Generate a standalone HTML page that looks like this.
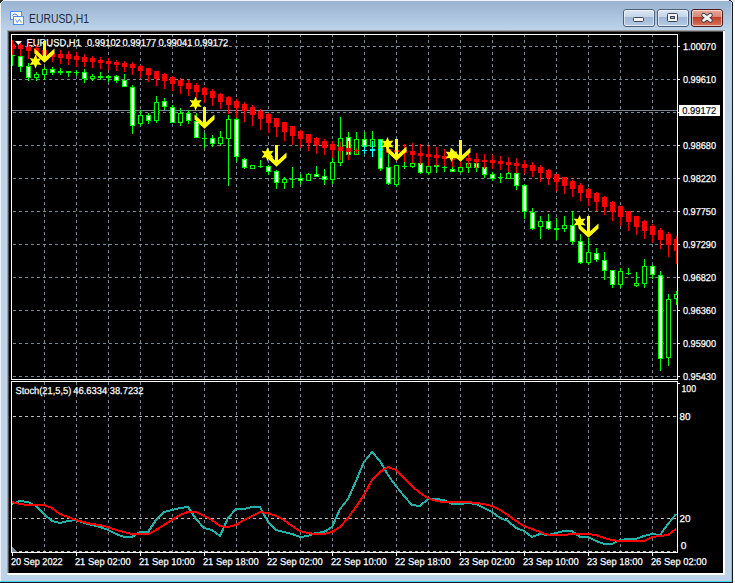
<!DOCTYPE html><html><head><meta charset="utf-8"><style>html,body{margin:0;padding:0;background:#fff;overflow:hidden}svg{display:block}</style></head><body><svg width="735" height="583" viewBox="0 0 735 583"><rect x="0" y="0" width="735" height="583" fill="#ffffff"/><rect x="0" y="0" width="733" height="583" fill="#1a1a1a"/><rect x="0" y="0" width="732" height="582" fill="#bcd3ea"/><defs><linearGradient id="tb" x1="0" y1="0" x2="0" y2="1"><stop offset="0" stop-color="#98b2d0"/><stop offset="1" stop-color="#bdd3ea"/></linearGradient><linearGradient id="bt" x1="0" y1="0" x2="0" y2="1"><stop offset="0" stop-color="#dbe7f4"/><stop offset="0.45" stop-color="#c3d5ea"/><stop offset="0.47" stop-color="#9fb8d5"/><stop offset="1" stop-color="#b8cde6"/></linearGradient><linearGradient id="cl" x1="0" y1="0" x2="0" y2="1"><stop offset="0" stop-color="#e9a99a"/><stop offset="0.45" stop-color="#d88673"/><stop offset="0.47" stop-color="#c0402a"/><stop offset="1" stop-color="#d77a60"/></linearGradient><linearGradient id="cy" x1="0" y1="0" x2="0" y2="1"><stop offset="0" stop-color="#9ee2f4"/><stop offset="0.3" stop-color="#60d8f4"/><stop offset="1" stop-color="#38dcf8"/></linearGradient><clipPath id="mc"><rect x="12" y="35" width="665" height="344"/></clipPath><clipPath id="sc"><rect x="12" y="382" width="665" height="170"/></clipPath></defs><rect x="1" y="1" width="731" height="29" fill="url(#tb)"/><rect x="0" y="0" width="732" height="1" fill="#eef3f9"/><rect x="0" y="0" width="1" height="582" fill="#eef3f9"/><rect x="731" y="2" width="1" height="580" fill="url(#cy)"/><rect x="0" y="581" width="732" height="1" fill="#40d8f0"/><rect x="0" y="0" width="3" height="1" fill="#2a2a2a"/><rect x="0" y="1" width="2" height="1" fill="#2a2a2a"/><rect x="0" y="2" width="1" height="1" fill="#2a2a2a"/><rect x="2" y="1" width="1" height="1" fill="#f0f4f8"/><rect x="1" y="2" width="1" height="1" fill="#f0f4f8"/><rect x="731" y="0" width="4" height="1" fill="#e8e8e8"/><rect x="732" y="1" width="3" height="1" fill="#e8e8e8"/><rect x="729" y="0" width="2" height="1" fill="#2a2a2a"/><rect x="731" y="1" width="1" height="1" fill="#2a2a2a"/><rect x="732" y="2" width="1" height="1" fill="#2a2a2a"/><rect x="7" y="30" width="718" height="1" fill="#a0a0a0"/><rect x="7" y="30" width="1" height="543" fill="#a0a0a0"/><rect x="8" y="31" width="716" height="1" fill="#505050"/><rect x="8" y="31" width="1" height="543" fill="#505050"/><rect x="723" y="31" width="2" height="544" fill="#ffffff"/><rect x="7" y="573" width="718" height="2" fill="#ffffff"/><rect x="9" y="32" width="714" height="541" fill="#000000"/><g shape-rendering="crispEdges"><rect x="10.5" y="11.5" width="11" height="8" fill="#fffdf0" stroke="#4a8cf0"/><rect x="13.5" y="16.5" width="10" height="8" fill="#fffdf0" stroke="#4a8cf0"/></g><path d="M15.5 19.3 L17.3 22.6 L19.4 19.3 L21.4 22.6" stroke="#4a86f0" fill="none" stroke-width="0.9"/><path d="M12.5 15.5 L14 14 L16.5 14.5 L18 16.5" stroke="#3f7ff0" fill="none" stroke-width="1"/><text x="29" y="23" font-family='"Liberation Sans", sans-serif' font-size="12.5" fill="#1e2a3e" textLength="60" lengthAdjust="spacingAndGlyphs">EURUSD,H1</text><rect x="623.5" y="9.5" width="31" height="17" rx="2.5" fill="url(#bt)" stroke="#4e5f78"/><rect x="624.5" y="10.5" width="29" height="15" rx="1.5" fill="none" stroke="#ffffff" stroke-opacity="0.55"/><rect x="657.5" y="9.5" width="31" height="17" rx="2.5" fill="url(#bt)" stroke="#4e5f78"/><rect x="658.5" y="10.5" width="29" height="15" rx="1.5" fill="none" stroke="#ffffff" stroke-opacity="0.55"/><rect x="691.5" y="9.5" width="31" height="17" rx="2.5" fill="url(#cl)" stroke="#4a1a1a"/><rect x="692.5" y="10.5" width="29" height="15" rx="1.5" fill="none" stroke="#ffffff" stroke-opacity="0.55"/><rect x="633.5" y="17.5" width="10" height="4" rx="1" fill="#f4f4f4" stroke="#3a4456"/><rect x="667.5" y="13.5" width="10" height="8" rx="1" fill="#f4f4f4" stroke="#3a4456"/><rect x="670.5" y="16.5" width="4" height="2" fill="#9db4cf" stroke="#3a4456"/><path d="M703.6 15.2 L710.4 20.3 M710.4 15.2 L703.6 20.3" stroke="#3a3a4a" stroke-width="4.6" stroke-linecap="round"/><path d="M703.6 15.2 L710.4 20.3 M710.4 15.2 L703.6 20.3" stroke="#f2f2f2" stroke-width="2.8" stroke-linecap="round"/><g shape-rendering="crispEdges"><line x1="44.5" y1="34" x2="44.5" y2="379" stroke="#778899" stroke-dasharray="3 3"/><line x1="44.5" y1="382" x2="44.5" y2="552" stroke="#778899" stroke-dasharray="3 3"/><line x1="76.5" y1="34" x2="76.5" y2="379" stroke="#778899" stroke-dasharray="3 3"/><line x1="76.5" y1="382" x2="76.5" y2="552" stroke="#778899" stroke-dasharray="3 3"/><line x1="108.5" y1="34" x2="108.5" y2="379" stroke="#778899" stroke-dasharray="3 3"/><line x1="108.5" y1="382" x2="108.5" y2="552" stroke="#778899" stroke-dasharray="3 3"/><line x1="140.5" y1="34" x2="140.5" y2="379" stroke="#778899" stroke-dasharray="3 3"/><line x1="140.5" y1="382" x2="140.5" y2="552" stroke="#778899" stroke-dasharray="3 3"/><line x1="172.5" y1="34" x2="172.5" y2="379" stroke="#778899" stroke-dasharray="3 3"/><line x1="172.5" y1="382" x2="172.5" y2="552" stroke="#778899" stroke-dasharray="3 3"/><line x1="204.5" y1="34" x2="204.5" y2="379" stroke="#778899" stroke-dasharray="3 3"/><line x1="204.5" y1="382" x2="204.5" y2="552" stroke="#778899" stroke-dasharray="3 3"/><line x1="236.5" y1="34" x2="236.5" y2="379" stroke="#778899" stroke-dasharray="3 3"/><line x1="236.5" y1="382" x2="236.5" y2="552" stroke="#778899" stroke-dasharray="3 3"/><line x1="268.5" y1="34" x2="268.5" y2="379" stroke="#778899" stroke-dasharray="3 3"/><line x1="268.5" y1="382" x2="268.5" y2="552" stroke="#778899" stroke-dasharray="3 3"/><line x1="300.5" y1="34" x2="300.5" y2="379" stroke="#778899" stroke-dasharray="3 3"/><line x1="300.5" y1="382" x2="300.5" y2="552" stroke="#778899" stroke-dasharray="3 3"/><line x1="332.5" y1="34" x2="332.5" y2="379" stroke="#778899" stroke-dasharray="3 3"/><line x1="332.5" y1="382" x2="332.5" y2="552" stroke="#778899" stroke-dasharray="3 3"/><line x1="364.5" y1="34" x2="364.5" y2="379" stroke="#778899" stroke-dasharray="3 3"/><line x1="364.5" y1="382" x2="364.5" y2="552" stroke="#778899" stroke-dasharray="3 3"/><line x1="396.5" y1="34" x2="396.5" y2="379" stroke="#778899" stroke-dasharray="3 3"/><line x1="396.5" y1="382" x2="396.5" y2="552" stroke="#778899" stroke-dasharray="3 3"/><line x1="428.5" y1="34" x2="428.5" y2="379" stroke="#778899" stroke-dasharray="3 3"/><line x1="428.5" y1="382" x2="428.5" y2="552" stroke="#778899" stroke-dasharray="3 3"/><line x1="460.5" y1="34" x2="460.5" y2="379" stroke="#778899" stroke-dasharray="3 3"/><line x1="460.5" y1="382" x2="460.5" y2="552" stroke="#778899" stroke-dasharray="3 3"/><line x1="492.5" y1="34" x2="492.5" y2="379" stroke="#778899" stroke-dasharray="3 3"/><line x1="492.5" y1="382" x2="492.5" y2="552" stroke="#778899" stroke-dasharray="3 3"/><line x1="524.5" y1="34" x2="524.5" y2="379" stroke="#778899" stroke-dasharray="3 3"/><line x1="524.5" y1="382" x2="524.5" y2="552" stroke="#778899" stroke-dasharray="3 3"/><line x1="556.5" y1="34" x2="556.5" y2="379" stroke="#778899" stroke-dasharray="3 3"/><line x1="556.5" y1="382" x2="556.5" y2="552" stroke="#778899" stroke-dasharray="3 3"/><line x1="588.5" y1="34" x2="588.5" y2="379" stroke="#778899" stroke-dasharray="3 3"/><line x1="588.5" y1="382" x2="588.5" y2="552" stroke="#778899" stroke-dasharray="3 3"/><line x1="620.5" y1="34" x2="620.5" y2="379" stroke="#778899" stroke-dasharray="3 3"/><line x1="620.5" y1="382" x2="620.5" y2="552" stroke="#778899" stroke-dasharray="3 3"/><line x1="652.5" y1="34" x2="652.5" y2="379" stroke="#778899" stroke-dasharray="3 3"/><line x1="652.5" y1="382" x2="652.5" y2="552" stroke="#778899" stroke-dasharray="3 3"/><line x1="13" y1="46.5" x2="677" y2="46.5" stroke="#778899" stroke-dasharray="3 3"/><line x1="13" y1="79.5" x2="677" y2="79.5" stroke="#778899" stroke-dasharray="3 3"/><line x1="13" y1="112.5" x2="677" y2="112.5" stroke="#778899" stroke-dasharray="3 3"/><line x1="13" y1="145.5" x2="677" y2="145.5" stroke="#778899" stroke-dasharray="3 3"/><line x1="13" y1="178.5" x2="677" y2="178.5" stroke="#778899" stroke-dasharray="3 3"/><line x1="13" y1="211.5" x2="677" y2="211.5" stroke="#778899" stroke-dasharray="3 3"/><line x1="13" y1="244.5" x2="677" y2="244.5" stroke="#778899" stroke-dasharray="3 3"/><line x1="13" y1="277.5" x2="677" y2="277.5" stroke="#778899" stroke-dasharray="3 3"/><line x1="13" y1="310.5" x2="677" y2="310.5" stroke="#778899" stroke-dasharray="3 3"/><line x1="13" y1="343.5" x2="677" y2="343.5" stroke="#778899" stroke-dasharray="3 3"/><line x1="13" y1="376.5" x2="677" y2="376.5" stroke="#778899" stroke-dasharray="3 3"/><line x1="13" y1="416.5" x2="677" y2="416.5" stroke="#c0c0c0" stroke-dasharray="3 3"/><line x1="13" y1="518.5" x2="677" y2="518.5" stroke="#c0c0c0" stroke-dasharray="3 3"/><line x1="13" y1="551.5" x2="677" y2="551.5" stroke="#c0c0c0" stroke-dasharray="3 3"/></g><rect x="12" y="110" width="665" height="1" fill="#778899"/><text x="26.50" y="46" font-family='"Liberation Sans", sans-serif' font-size="10" fill="#ffffff" stroke="#ffffff" stroke-width="0.25" textLength="54.40" lengthAdjust="spacingAndGlyphs" text-rendering="geometricPrecision">EURUSD,H1</text><text x="87.00" y="46" font-family='"Liberation Sans", sans-serif' font-size="10" fill="#ffffff" stroke="#ffffff" stroke-width="0.25" textLength="33.80" lengthAdjust="spacingAndGlyphs" text-rendering="geometricPrecision">0.99102</text><text x="122.50" y="46" font-family='"Liberation Sans", sans-serif' font-size="10" fill="#ffffff" stroke="#ffffff" stroke-width="0.25" textLength="33.80" lengthAdjust="spacingAndGlyphs" text-rendering="geometricPrecision">0.99177</text><text x="158.60" y="46" font-family='"Liberation Sans", sans-serif' font-size="10" fill="#ffffff" stroke="#ffffff" stroke-width="0.25" textLength="33.80" lengthAdjust="spacingAndGlyphs" text-rendering="geometricPrecision">0.99041</text><text x="194.50" y="46" font-family='"Liberation Sans", sans-serif' font-size="10" fill="#ffffff" stroke="#ffffff" stroke-width="0.25" textLength="33.80" lengthAdjust="spacingAndGlyphs" text-rendering="geometricPrecision">0.99172</text><g clip-path="url(#mc)" shape-rendering="crispEdges"><rect x="12" y="55" width="1" height="11" fill="#00ff00"/><rect x="10" y="55" width="5" height="1" fill="#00ff00"/><rect x="20" y="56" width="1" height="16" fill="#00ff00"/><rect x="18" y="56" width="5" height="11" fill="#00ff00"/><rect x="19" y="57" width="3" height="9" fill="#ffffff"/><rect x="28" y="63" width="1" height="18" fill="#00ff00"/><rect x="26" y="66" width="5" height="12" fill="#00ff00"/><rect x="27" y="67" width="3" height="10" fill="#ffffff"/><rect x="36" y="72" width="1" height="9" fill="#00ff00"/><rect x="34" y="74" width="5" height="4" fill="#00ff00"/><rect x="35" y="75" width="3" height="2" fill="#000000"/><rect x="44" y="67" width="1" height="13" fill="#00ff00"/><rect x="42" y="69" width="5" height="6" fill="#00ff00"/><rect x="43" y="70" width="3" height="4" fill="#000000"/><rect x="52" y="67" width="1" height="8" fill="#00ff00"/><rect x="50" y="69" width="5" height="4" fill="#00ff00"/><rect x="51" y="70" width="3" height="2" fill="#ffffff"/><rect x="60" y="68" width="1" height="7" fill="#00ff00"/><rect x="58" y="71" width="5" height="2" fill="#00ff00"/><rect x="68" y="71" width="1" height="6" fill="#00ff00"/><rect x="66" y="71" width="5" height="2" fill="#00ff00"/><rect x="76" y="70" width="1" height="6" fill="#00ff00"/><rect x="74" y="72" width="5" height="1" fill="#00ff00"/><rect x="84" y="69" width="1" height="14" fill="#00ff00"/><rect x="82" y="72" width="5" height="7" fill="#00ff00"/><rect x="83" y="73" width="3" height="5" fill="#ffffff"/><rect x="92" y="74" width="1" height="7" fill="#00ff00"/><rect x="90" y="76" width="5" height="3" fill="#00ff00"/><rect x="91" y="77" width="3" height="1" fill="#000000"/><rect x="100" y="72" width="1" height="8" fill="#00ff00"/><rect x="98" y="76" width="5" height="2" fill="#00ff00"/><rect x="108" y="75" width="1" height="7" fill="#00ff00"/><rect x="106" y="76" width="5" height="2" fill="#00ff00"/><rect x="116" y="75" width="1" height="8" fill="#00ff00"/><rect x="114" y="76" width="5" height="5" fill="#00ff00"/><rect x="115" y="77" width="3" height="3" fill="#ffffff"/><rect x="124" y="74" width="1" height="13" fill="#00ff00"/><rect x="122" y="80" width="5" height="7" fill="#00ff00"/><rect x="123" y="81" width="3" height="5" fill="#ffffff"/><rect x="132" y="85" width="1" height="49" fill="#00ff00"/><rect x="130" y="87" width="5" height="39" fill="#00ff00"/><rect x="131" y="88" width="3" height="37" fill="#ffffff"/><rect x="140" y="110" width="1" height="16" fill="#00ff00"/><rect x="138" y="115" width="5" height="9" fill="#00ff00"/><rect x="139" y="116" width="3" height="7" fill="#000000"/><rect x="148" y="113" width="1" height="11" fill="#00ff00"/><rect x="146" y="115" width="5" height="6" fill="#00ff00"/><rect x="147" y="116" width="3" height="4" fill="#ffffff"/><rect x="156" y="96" width="1" height="27" fill="#00ff00"/><rect x="154" y="102" width="5" height="19" fill="#00ff00"/><rect x="155" y="103" width="3" height="17" fill="#000000"/><rect x="164" y="98" width="1" height="12" fill="#00ff00"/><rect x="162" y="101" width="5" height="6" fill="#00ff00"/><rect x="163" y="102" width="3" height="4" fill="#ffffff"/><rect x="172" y="105" width="1" height="18" fill="#00ff00"/><rect x="170" y="107" width="5" height="16" fill="#00ff00"/><rect x="171" y="108" width="3" height="14" fill="#ffffff"/><rect x="180" y="108" width="1" height="18" fill="#00ff00"/><rect x="178" y="113" width="5" height="10" fill="#00ff00"/><rect x="179" y="114" width="3" height="8" fill="#000000"/><rect x="188" y="110" width="1" height="14" fill="#00ff00"/><rect x="186" y="113" width="5" height="8" fill="#00ff00"/><rect x="187" y="114" width="3" height="6" fill="#ffffff"/><rect x="196" y="113" width="1" height="25" fill="#00ff00"/><rect x="194" y="121" width="5" height="17" fill="#00ff00"/><rect x="195" y="122" width="3" height="15" fill="#ffffff"/><rect x="204" y="133" width="1" height="15" fill="#00ff00"/><rect x="202" y="138" width="5" height="1" fill="#00ff00"/><rect x="212" y="135" width="1" height="12" fill="#00ff00"/><rect x="210" y="138" width="5" height="6" fill="#00ff00"/><rect x="211" y="139" width="3" height="4" fill="#ffffff"/><rect x="220" y="131" width="1" height="15" fill="#00ff00"/><rect x="218" y="137" width="5" height="7" fill="#00ff00"/><rect x="219" y="138" width="3" height="5" fill="#000000"/><rect x="228" y="115" width="1" height="71" fill="#00ff00"/><rect x="226" y="119" width="5" height="20" fill="#00ff00"/><rect x="227" y="120" width="3" height="18" fill="#000000"/><rect x="236" y="117" width="1" height="45" fill="#00ff00"/><rect x="234" y="119" width="5" height="38" fill="#00ff00"/><rect x="235" y="120" width="3" height="36" fill="#ffffff"/><rect x="244" y="158" width="1" height="11" fill="#00ff00"/><rect x="242" y="159" width="5" height="9" fill="#00ff00"/><rect x="243" y="160" width="3" height="7" fill="#ffffff"/><rect x="252" y="165" width="1" height="4" fill="#00ff00"/><rect x="250" y="165" width="5" height="4" fill="#00ff00"/><rect x="251" y="166" width="3" height="2" fill="#000000"/><rect x="260" y="160" width="1" height="8" fill="#00ff00"/><rect x="258" y="166" width="5" height="1" fill="#00ff00"/><rect x="268" y="165" width="1" height="10" fill="#00ff00"/><rect x="266" y="166" width="5" height="6" fill="#00ff00"/><rect x="267" y="167" width="3" height="4" fill="#ffffff"/><rect x="276" y="170" width="1" height="19" fill="#00ff00"/><rect x="274" y="171" width="5" height="12" fill="#00ff00"/><rect x="275" y="172" width="3" height="10" fill="#ffffff"/><rect x="284" y="177" width="1" height="12" fill="#00ff00"/><rect x="282" y="179" width="5" height="4" fill="#00ff00"/><rect x="283" y="180" width="3" height="2" fill="#000000"/><rect x="292" y="167" width="1" height="21" fill="#00ff00"/><rect x="290" y="179" width="5" height="1" fill="#00ff00"/><rect x="300" y="174" width="1" height="11" fill="#00ff00"/><rect x="298" y="178" width="5" height="3" fill="#00ff00"/><rect x="299" y="179" width="3" height="1" fill="#ffffff"/><rect x="308" y="173" width="1" height="8" fill="#00ff00"/><rect x="306" y="174" width="5" height="7" fill="#00ff00"/><rect x="307" y="175" width="3" height="5" fill="#000000"/><rect x="316" y="166" width="1" height="11" fill="#00ff00"/><rect x="314" y="174" width="5" height="3" fill="#00ff00"/><rect x="315" y="175" width="3" height="1" fill="#ffffff"/><rect x="324" y="169" width="1" height="16" fill="#00ff00"/><rect x="322" y="176" width="5" height="4" fill="#00ff00"/><rect x="323" y="177" width="3" height="2" fill="#ffffff"/><rect x="332" y="158" width="1" height="26" fill="#00ff00"/><rect x="330" y="162" width="5" height="18" fill="#00ff00"/><rect x="331" y="163" width="3" height="16" fill="#000000"/><rect x="340" y="117" width="1" height="49" fill="#00ff00"/><rect x="338" y="138" width="5" height="25" fill="#00ff00"/><rect x="339" y="139" width="3" height="23" fill="#000000"/><rect x="348" y="132" width="1" height="24" fill="#00ff00"/><rect x="346" y="137" width="5" height="18" fill="#00ff00"/><rect x="347" y="138" width="3" height="16" fill="#ffffff"/><rect x="356" y="132" width="1" height="23" fill="#00ff00"/><rect x="354" y="139" width="5" height="16" fill="#00ff00"/><rect x="355" y="140" width="3" height="14" fill="#000000"/><rect x="364" y="132" width="1" height="15" fill="#00ff00"/><rect x="362" y="139" width="5" height="8" fill="#00ff00"/><rect x="363" y="140" width="3" height="6" fill="#ffffff"/><rect x="372" y="131" width="1" height="17" fill="#00ff00"/><rect x="370" y="139" width="5" height="8" fill="#00ff00"/><rect x="371" y="140" width="3" height="6" fill="#000000"/><rect x="380" y="139" width="1" height="32" fill="#00ff00"/><rect x="378" y="139" width="5" height="30" fill="#00ff00"/><rect x="379" y="140" width="3" height="28" fill="#ffffff"/><rect x="388" y="154" width="1" height="31" fill="#00ff00"/><rect x="386" y="167" width="5" height="17" fill="#00ff00"/><rect x="387" y="168" width="3" height="15" fill="#ffffff"/><rect x="396" y="165" width="1" height="22" fill="#00ff00"/><rect x="394" y="165" width="5" height="20" fill="#00ff00"/><rect x="395" y="166" width="3" height="18" fill="#000000"/><rect x="404" y="161" width="1" height="8" fill="#00ff00"/><rect x="402" y="166" width="5" height="1" fill="#00ff00"/><rect x="412" y="163" width="1" height="5" fill="#00ff00"/><rect x="410" y="163" width="5" height="4" fill="#00ff00"/><rect x="411" y="164" width="3" height="2" fill="#000000"/><rect x="420" y="163" width="1" height="11" fill="#00ff00"/><rect x="418" y="163" width="5" height="10" fill="#00ff00"/><rect x="419" y="164" width="3" height="8" fill="#ffffff"/><rect x="428" y="165" width="1" height="10" fill="#00ff00"/><rect x="426" y="166" width="5" height="7" fill="#00ff00"/><rect x="427" y="167" width="3" height="5" fill="#000000"/><rect x="436" y="165" width="1" height="8" fill="#00ff00"/><rect x="434" y="165" width="5" height="2" fill="#00ff00"/><rect x="444" y="166" width="1" height="6" fill="#00ff00"/><rect x="442" y="167" width="5" height="1" fill="#00ff00"/><rect x="452" y="167" width="1" height="5" fill="#00ff00"/><rect x="450" y="169" width="5" height="3" fill="#00ff00"/><rect x="451" y="170" width="3" height="1" fill="#ffffff"/><rect x="460" y="167" width="1" height="6" fill="#00ff00"/><rect x="458" y="167" width="5" height="5" fill="#00ff00"/><rect x="459" y="168" width="3" height="3" fill="#000000"/><rect x="468" y="163" width="1" height="10" fill="#00ff00"/><rect x="466" y="163" width="5" height="5" fill="#00ff00"/><rect x="467" y="164" width="3" height="3" fill="#000000"/><rect x="476" y="162" width="1" height="10" fill="#00ff00"/><rect x="474" y="163" width="5" height="5" fill="#00ff00"/><rect x="475" y="164" width="3" height="3" fill="#ffffff"/><rect x="484" y="166" width="1" height="12" fill="#00ff00"/><rect x="482" y="167" width="5" height="8" fill="#00ff00"/><rect x="483" y="168" width="3" height="6" fill="#ffffff"/><rect x="492" y="172" width="1" height="9" fill="#00ff00"/><rect x="490" y="174" width="5" height="5" fill="#00ff00"/><rect x="491" y="175" width="3" height="3" fill="#ffffff"/><rect x="500" y="173" width="1" height="10" fill="#00ff00"/><rect x="498" y="177" width="5" height="1" fill="#00ff00"/><rect x="508" y="172" width="1" height="7" fill="#00ff00"/><rect x="506" y="173" width="5" height="6" fill="#00ff00"/><rect x="507" y="174" width="3" height="4" fill="#000000"/><rect x="516" y="172" width="1" height="18" fill="#00ff00"/><rect x="514" y="173" width="5" height="13" fill="#00ff00"/><rect x="515" y="174" width="3" height="11" fill="#ffffff"/><rect x="524" y="184" width="1" height="35" fill="#00ff00"/><rect x="522" y="185" width="5" height="27" fill="#00ff00"/><rect x="523" y="186" width="3" height="25" fill="#ffffff"/><rect x="532" y="208" width="1" height="22" fill="#00ff00"/><rect x="530" y="212" width="5" height="17" fill="#00ff00"/><rect x="531" y="213" width="3" height="15" fill="#ffffff"/><rect x="540" y="216" width="1" height="23" fill="#00ff00"/><rect x="538" y="221" width="5" height="6" fill="#00ff00"/><rect x="539" y="222" width="3" height="4" fill="#000000"/><rect x="548" y="214" width="1" height="16" fill="#00ff00"/><rect x="546" y="221" width="5" height="8" fill="#00ff00"/><rect x="547" y="222" width="3" height="6" fill="#ffffff"/><rect x="556" y="218" width="1" height="22" fill="#00ff00"/><rect x="554" y="228" width="5" height="2" fill="#00ff00"/><rect x="564" y="216" width="1" height="16" fill="#00ff00"/><rect x="562" y="225" width="5" height="4" fill="#00ff00"/><rect x="563" y="226" width="3" height="2" fill="#000000"/><rect x="572" y="211" width="1" height="33" fill="#00ff00"/><rect x="570" y="225" width="5" height="17" fill="#00ff00"/><rect x="571" y="226" width="3" height="15" fill="#ffffff"/><rect x="580" y="234" width="1" height="30" fill="#00ff00"/><rect x="578" y="241" width="5" height="22" fill="#00ff00"/><rect x="579" y="242" width="3" height="20" fill="#ffffff"/><rect x="588" y="238" width="1" height="27" fill="#00ff00"/><rect x="586" y="252" width="5" height="11" fill="#00ff00"/><rect x="587" y="253" width="3" height="9" fill="#000000"/><rect x="596" y="248" width="1" height="14" fill="#00ff00"/><rect x="594" y="253" width="5" height="7" fill="#00ff00"/><rect x="595" y="254" width="3" height="5" fill="#ffffff"/><rect x="604" y="252" width="1" height="28" fill="#00ff00"/><rect x="602" y="260" width="5" height="11" fill="#00ff00"/><rect x="603" y="261" width="3" height="9" fill="#ffffff"/><rect x="612" y="270" width="1" height="18" fill="#00ff00"/><rect x="610" y="270" width="5" height="15" fill="#00ff00"/><rect x="611" y="271" width="3" height="13" fill="#ffffff"/><rect x="620" y="268" width="1" height="20" fill="#00ff00"/><rect x="618" y="271" width="5" height="14" fill="#00ff00"/><rect x="619" y="272" width="3" height="12" fill="#000000"/><rect x="628" y="268" width="1" height="7" fill="#00ff00"/><rect x="626" y="273" width="5" height="1" fill="#00ff00"/><rect x="636" y="272" width="1" height="15" fill="#00ff00"/><rect x="634" y="283" width="5" height="3" fill="#00ff00"/><rect x="635" y="284" width="3" height="1" fill="#000000"/><rect x="644" y="259" width="1" height="29" fill="#00ff00"/><rect x="642" y="266" width="5" height="18" fill="#00ff00"/><rect x="643" y="267" width="3" height="16" fill="#000000"/><rect x="652" y="265" width="1" height="14" fill="#00ff00"/><rect x="650" y="266" width="5" height="9" fill="#00ff00"/><rect x="651" y="267" width="3" height="7" fill="#ffffff"/><rect x="660" y="271" width="1" height="100" fill="#00ff00"/><rect x="658" y="275" width="5" height="84" fill="#00ff00"/><rect x="659" y="276" width="3" height="82" fill="#ffffff"/><rect x="668" y="294" width="1" height="72" fill="#00ff00"/><rect x="666" y="299" width="5" height="59" fill="#00ff00"/><rect x="667" y="300" width="3" height="57" fill="#000000"/><rect x="676" y="291" width="1" height="14" fill="#00ff00"/><rect x="674" y="294" width="5" height="5" fill="#00ff00"/><rect x="675" y="295" width="3" height="3" fill="#000000"/><rect x="12" y="40" width="1" height="15" fill="#ff0000"/><rect x="10" y="44" width="5" height="5" fill="#ff0000"/><rect x="20" y="43" width="1" height="13" fill="#ff0000"/><rect x="18" y="45" width="5" height="4" fill="#ff0000"/><rect x="28" y="43" width="1" height="16" fill="#ff0000"/><rect x="26" y="47" width="5" height="4" fill="#ff0000"/><rect x="36" y="45" width="1" height="16" fill="#ff0000"/><rect x="34" y="48" width="5" height="5" fill="#ff0000"/><rect x="44" y="47" width="1" height="15" fill="#ff0000"/><rect x="42" y="50" width="5" height="5" fill="#ff0000"/><rect x="52" y="50" width="1" height="12" fill="#ff0000"/><rect x="50" y="53" width="5" height="4" fill="#ff0000"/><rect x="60" y="50" width="1" height="14" fill="#ff0000"/><rect x="58" y="54" width="5" height="4" fill="#ff0000"/><rect x="68" y="51" width="1" height="14" fill="#ff0000"/><rect x="66" y="54" width="5" height="5" fill="#ff0000"/><rect x="76" y="52" width="1" height="15" fill="#ff0000"/><rect x="74" y="56" width="5" height="4" fill="#ff0000"/><rect x="84" y="54" width="1" height="13" fill="#ff0000"/><rect x="82" y="57" width="5" height="5" fill="#ff0000"/><rect x="92" y="56" width="1" height="12" fill="#ff0000"/><rect x="90" y="58" width="5" height="4" fill="#ff0000"/><rect x="100" y="57" width="1" height="12" fill="#ff0000"/><rect x="98" y="60" width="5" height="3" fill="#ff0000"/><rect x="108" y="58" width="1" height="12" fill="#ff0000"/><rect x="106" y="61" width="5" height="3" fill="#ff0000"/><rect x="116" y="60" width="1" height="11" fill="#ff0000"/><rect x="114" y="62" width="5" height="3" fill="#ff0000"/><rect x="124" y="61" width="1" height="11" fill="#ff0000"/><rect x="122" y="63" width="5" height="4" fill="#ff0000"/><rect x="132" y="62" width="1" height="13" fill="#ff0000"/><rect x="130" y="64" width="5" height="4" fill="#ff0000"/><rect x="140" y="65" width="1" height="13" fill="#ff0000"/><rect x="138" y="66" width="5" height="5" fill="#ff0000"/><rect x="148" y="68" width="1" height="14" fill="#ff0000"/><rect x="146" y="68" width="5" height="7" fill="#ff0000"/><rect x="156" y="71" width="1" height="15" fill="#ff0000"/><rect x="154" y="71" width="5" height="8" fill="#ff0000"/><rect x="164" y="73" width="1" height="16" fill="#ff0000"/><rect x="162" y="74" width="5" height="7" fill="#ff0000"/><rect x="172" y="76" width="1" height="15" fill="#ff0000"/><rect x="170" y="77" width="5" height="7" fill="#ff0000"/><rect x="180" y="78" width="1" height="16" fill="#ff0000"/><rect x="178" y="80" width="5" height="6" fill="#ff0000"/><rect x="188" y="80" width="1" height="16" fill="#ff0000"/><rect x="186" y="83" width="5" height="6" fill="#ff0000"/><rect x="196" y="83" width="1" height="15" fill="#ff0000"/><rect x="194" y="85" width="5" height="7" fill="#ff0000"/><rect x="204" y="87" width="1" height="16" fill="#ff0000"/><rect x="202" y="88" width="5" height="7" fill="#ff0000"/><rect x="212" y="89" width="1" height="17" fill="#ff0000"/><rect x="210" y="91" width="5" height="7" fill="#ff0000"/><rect x="220" y="93" width="1" height="16" fill="#ff0000"/><rect x="218" y="94" width="5" height="8" fill="#ff0000"/><rect x="228" y="96" width="1" height="18" fill="#ff0000"/><rect x="226" y="97" width="5" height="8" fill="#ff0000"/><rect x="236" y="99" width="1" height="19" fill="#ff0000"/><rect x="234" y="101" width="5" height="7" fill="#ff0000"/><rect x="244" y="102" width="1" height="20" fill="#ff0000"/><rect x="242" y="104" width="5" height="7" fill="#ff0000"/><rect x="252" y="105" width="1" height="21" fill="#ff0000"/><rect x="250" y="107" width="5" height="8" fill="#ff0000"/><rect x="260" y="109" width="1" height="21" fill="#ff0000"/><rect x="258" y="111" width="5" height="8" fill="#ff0000"/><rect x="268" y="113" width="1" height="20" fill="#ff0000"/><rect x="266" y="114" width="5" height="9" fill="#ff0000"/><rect x="276" y="118" width="1" height="19" fill="#ff0000"/><rect x="274" y="118" width="5" height="9" fill="#ff0000"/><rect x="284" y="122" width="1" height="19" fill="#ff0000"/><rect x="282" y="122" width="5" height="10" fill="#ff0000"/><rect x="292" y="126" width="1" height="19" fill="#ff0000"/><rect x="290" y="126" width="5" height="10" fill="#ff0000"/><rect x="300" y="130" width="1" height="18" fill="#ff0000"/><rect x="298" y="131" width="5" height="8" fill="#ff0000"/><rect x="308" y="134" width="1" height="17" fill="#ff0000"/><rect x="306" y="134" width="5" height="9" fill="#ff0000"/><rect x="316" y="137" width="1" height="17" fill="#ff0000"/><rect x="314" y="138" width="5" height="7" fill="#ff0000"/><rect x="324" y="139" width="1" height="16" fill="#ff0000"/><rect x="322" y="141" width="5" height="7" fill="#ff0000"/><rect x="332" y="141" width="1" height="17" fill="#ff0000"/><rect x="330" y="144" width="5" height="6" fill="#ff0000"/><rect x="340" y="142" width="1" height="18" fill="#ff0000"/><rect x="338" y="147" width="5" height="4" fill="#ff0000"/><rect x="348" y="141" width="1" height="19" fill="#ff0000"/><rect x="346" y="148" width="5" height="4" fill="#ff0000"/><rect x="356" y="148" width="1" height="6" fill="#ff0000"/><rect x="354" y="150" width="5" height="1" fill="#ff0000"/><rect x="364" y="145" width="1" height="9" fill="#00ffff"/><rect x="362" y="150" width="5" height="1" fill="#00ffff"/><rect x="372" y="141" width="1" height="16" fill="#00ffff"/><rect x="370" y="149" width="5" height="2" fill="#00ffff"/><rect x="380" y="140" width="1" height="18" fill="#00ffff"/><rect x="378" y="149" width="5" height="1" fill="#00ffff"/><rect x="388" y="143" width="1" height="11" fill="#ff0000"/><rect x="386" y="149" width="5" height="4" fill="#ff0000"/><rect x="396" y="143" width="1" height="18" fill="#ff0000"/><rect x="394" y="150" width="5" height="2" fill="#ff0000"/><rect x="404" y="144" width="1" height="18" fill="#ff0000"/><rect x="402" y="150" width="5" height="3" fill="#ff0000"/><rect x="412" y="143" width="1" height="20" fill="#ff0000"/><rect x="410" y="151" width="5" height="4" fill="#ff0000"/><rect x="420" y="144" width="1" height="21" fill="#ff0000"/><rect x="418" y="153" width="5" height="3" fill="#ff0000"/><rect x="428" y="146" width="1" height="20" fill="#ff0000"/><rect x="426" y="154" width="5" height="3" fill="#ff0000"/><rect x="436" y="147" width="1" height="19" fill="#ff0000"/><rect x="434" y="155" width="5" height="3" fill="#ff0000"/><rect x="444" y="149" width="1" height="17" fill="#ff0000"/><rect x="442" y="156" width="5" height="3" fill="#ff0000"/><rect x="452" y="150" width="1" height="17" fill="#ff0000"/><rect x="450" y="157" width="5" height="3" fill="#ff0000"/><rect x="460" y="151" width="1" height="16" fill="#ff0000"/><rect x="458" y="157" width="5" height="3" fill="#ff0000"/><rect x="468" y="153" width="1" height="14" fill="#ff0000"/><rect x="466" y="158" width="5" height="3" fill="#ff0000"/><rect x="476" y="153" width="1" height="15" fill="#ff0000"/><rect x="474" y="159" width="5" height="3" fill="#ff0000"/><rect x="484" y="154" width="1" height="15" fill="#ff0000"/><rect x="482" y="160" width="5" height="2" fill="#ff0000"/><rect x="492" y="155" width="1" height="14" fill="#ff0000"/><rect x="490" y="160" width="5" height="3" fill="#ff0000"/><rect x="500" y="156" width="1" height="14" fill="#ff0000"/><rect x="498" y="161" width="5" height="3" fill="#ff0000"/><rect x="508" y="157" width="1" height="15" fill="#ff0000"/><rect x="506" y="162" width="5" height="3" fill="#ff0000"/><rect x="516" y="158" width="1" height="15" fill="#ff0000"/><rect x="514" y="163" width="5" height="3" fill="#ff0000"/><rect x="524" y="160" width="1" height="14" fill="#ff0000"/><rect x="522" y="164" width="5" height="4" fill="#ff0000"/><rect x="532" y="162" width="1" height="15" fill="#ff0000"/><rect x="530" y="165" width="5" height="6" fill="#ff0000"/><rect x="540" y="165" width="1" height="17" fill="#ff0000"/><rect x="538" y="167" width="5" height="6" fill="#ff0000"/><rect x="548" y="169" width="1" height="16" fill="#ff0000"/><rect x="546" y="170" width="5" height="8" fill="#ff0000"/><rect x="556" y="174" width="1" height="17" fill="#ff0000"/><rect x="554" y="174" width="5" height="8" fill="#ff0000"/><rect x="564" y="177" width="1" height="17" fill="#ff0000"/><rect x="562" y="177" width="5" height="9" fill="#ff0000"/><rect x="572" y="180" width="1" height="17" fill="#ff0000"/><rect x="570" y="181" width="5" height="8" fill="#ff0000"/><rect x="580" y="183" width="1" height="18" fill="#ff0000"/><rect x="578" y="185" width="5" height="8" fill="#ff0000"/><rect x="588" y="188" width="1" height="18" fill="#ff0000"/><rect x="586" y="189" width="5" height="9" fill="#ff0000"/><rect x="596" y="192" width="1" height="19" fill="#ff0000"/><rect x="594" y="193" width="5" height="9" fill="#ff0000"/><rect x="604" y="196" width="1" height="19" fill="#ff0000"/><rect x="602" y="197" width="5" height="10" fill="#ff0000"/><rect x="612" y="201" width="1" height="20" fill="#ff0000"/><rect x="610" y="202" width="5" height="10" fill="#ff0000"/><rect x="620" y="206" width="1" height="20" fill="#ff0000"/><rect x="618" y="206" width="5" height="11" fill="#ff0000"/><rect x="628" y="211" width="1" height="20" fill="#ff0000"/><rect x="626" y="211" width="5" height="11" fill="#ff0000"/><rect x="636" y="216" width="1" height="19" fill="#ff0000"/><rect x="634" y="216" width="5" height="11" fill="#ff0000"/><rect x="644" y="220" width="1" height="19" fill="#ff0000"/><rect x="642" y="221" width="5" height="10" fill="#ff0000"/><rect x="652" y="224" width="1" height="19" fill="#ff0000"/><rect x="650" y="226" width="5" height="9" fill="#ff0000"/><rect x="660" y="228" width="1" height="21" fill="#ff0000"/><rect x="658" y="230" width="5" height="10" fill="#ff0000"/><rect x="668" y="232" width="1" height="25" fill="#ff0000"/><rect x="666" y="234" width="5" height="11" fill="#ff0000"/><rect x="676" y="236" width="1" height="28" fill="#ff0000"/><rect x="674" y="239" width="5" height="12" fill="#ff0000"/></g><g clip-path="url(#mc)"><polygon points="35.50,54.60 37.20,58.66 41.56,58.10 38.90,61.60 41.56,65.10 37.20,64.54 35.50,68.60 33.80,64.54 29.44,65.10 32.10,61.60 29.44,58.10 33.80,58.66" fill="#ffff00"/><polygon points="195.60,96.50 197.30,100.56 201.66,100.00 199.00,103.50 201.66,107.00 197.30,106.44 195.60,110.50 193.90,106.44 189.54,107.00 192.20,103.50 189.54,100.00 193.90,100.56" fill="#ffff00"/><polygon points="267.60,147.30 269.30,151.36 273.66,150.80 271.00,154.30 273.66,157.80 269.30,157.24 267.60,161.30 265.90,157.24 261.54,157.80 264.20,154.30 261.54,150.80 265.90,151.36" fill="#ffff00"/><polygon points="387.50,137.00 389.20,141.06 393.56,140.50 390.90,144.00 393.56,147.50 389.20,146.94 387.50,151.00 385.80,146.94 381.44,147.50 384.10,144.00 381.44,140.50 385.80,141.06" fill="#ffff00"/><polygon points="451.50,148.00 453.20,152.06 457.56,151.50 454.90,155.00 457.56,158.50 453.20,157.94 451.50,162.00 449.80,157.94 445.44,158.50 448.10,155.00 445.44,151.50 449.80,152.06" fill="#ffff00"/><polygon points="579.60,215.00 581.30,219.06 585.66,218.50 583.00,222.00 585.66,225.50 581.30,224.94 579.60,229.00 577.90,224.94 573.54,225.50 576.20,222.00 573.54,218.50 577.90,219.06" fill="#ffff00"/><polygon points="43.00,41.00 46.00,41.00 46.00,56.30 54.50,48.40 54.50,53.40 44.50,62.70 34.50,53.40 34.50,48.40 43.00,56.30" fill="#ffff00"/><polygon points="203.00,107.00 206.00,107.00 206.00,122.30 214.50,114.40 214.50,119.40 204.50,128.70 194.50,119.40 194.50,114.40 203.00,122.30" fill="#ffff00"/><polygon points="275.00,145.00 278.00,145.00 278.00,160.30 286.50,152.40 286.50,157.40 276.50,166.70 266.50,157.40 266.50,152.40 275.00,160.30" fill="#ffff00"/><polygon points="395.00,139.00 398.00,139.00 398.00,154.30 406.50,146.40 406.50,151.40 396.50,160.70 386.50,151.40 386.50,146.40 395.00,154.30" fill="#ffff00"/><polygon points="459.00,140.00 462.00,140.00 462.00,155.30 470.50,147.40 470.50,152.40 460.50,161.70 450.50,152.40 450.50,147.40 459.00,155.30" fill="#ffff00"/><polygon points="587.00,216.00 590.00,216.00 590.00,231.30 598.50,223.40 598.50,228.40 588.50,237.70 578.50,228.40 578.50,223.40 587.00,231.30" fill="#ffff00"/></g><polygon points="15,41 22,41 18.5,45" fill="#ffffff"/><g shape-rendering="crispEdges"><rect x="11.5" y="34.5" width="666" height="345" fill="none" stroke="#ffffff"/><rect x="11.5" y="381.5" width="666" height="171" fill="none" stroke="#ffffff"/><rect x="678" y="46" width="2" height="1" fill="#ffffff"/><rect x="678" y="79" width="2" height="1" fill="#ffffff"/><rect x="678" y="112" width="2" height="1" fill="#ffffff"/><rect x="678" y="145" width="2" height="1" fill="#ffffff"/><rect x="678" y="178" width="2" height="1" fill="#ffffff"/><rect x="678" y="211" width="2" height="1" fill="#ffffff"/><rect x="678" y="244" width="2" height="1" fill="#ffffff"/><rect x="678" y="277" width="2" height="1" fill="#ffffff"/><rect x="678" y="310" width="2" height="1" fill="#ffffff"/><rect x="678" y="343" width="2" height="1" fill="#ffffff"/><rect x="678" y="376" width="2" height="1" fill="#ffffff"/><rect x="678" y="383" width="2" height="1" fill="#ffffff"/><rect x="12" y="553" width="1" height="3" fill="#ffffff"/><rect x="76" y="553" width="1" height="3" fill="#ffffff"/><rect x="140" y="553" width="1" height="3" fill="#ffffff"/><rect x="204" y="553" width="1" height="3" fill="#ffffff"/><rect x="268" y="553" width="1" height="3" fill="#ffffff"/><rect x="332" y="553" width="1" height="3" fill="#ffffff"/><rect x="396" y="553" width="1" height="3" fill="#ffffff"/><rect x="460" y="553" width="1" height="3" fill="#ffffff"/><rect x="524" y="553" width="1" height="3" fill="#ffffff"/><rect x="588" y="553" width="1" height="3" fill="#ffffff"/><rect x="652" y="553" width="1" height="3" fill="#ffffff"/></g><polygon points="12,547 12,552 17,552" fill="#778899" shape-rendering="crispEdges"/><g clip-path="url(#sc)"><polyline points="12,504 20,501 28,502 36,506 44,514 52,521 60,523 68,521 76,520 84,523 92,525 100,527 108,530 116,534 124,537 132,537 140,532 148,532 156,520 164,512 172,510 180,508 188,507 196,519 204,528 212,530 220,536 228,518 236,509 244,509 252,507 260,507 268,522 276,530 284,532 292,534 300,537 308,536 316,533 324,532 332,527 340,509 348,499 356,481 364,462 372,452 380,461 388,475 396,486 404,496 412,505 420,506 428,499 436,499 444,500 452,504 460,504 468,503 476,504 484,508 492,512 500,518 508,521 516,528 524,531 532,537 540,534 548,535 556,533 564,531 572,531 580,537 588,537 596,541 604,544 612,544 620,540 628,539 636,539 644,536 652,534 660,535 668,524 676,514" fill="none" stroke="#20b2aa" stroke-width="2" stroke-linejoin="round" shape-rendering="crispEdges"/><polyline points="12,502 20,504 28,505 36,505 44,505 52,508 60,514 68,517 76,520 84,522 92,524 100,525 108,527 116,530 124,532 132,534 140,534 148,534 156,530 164,525 172,520 180,515 188,512 196,512 204,516 212,520 220,526 228,527 236,525 244,520 252,516 260,512 268,513 276,516 284,520 292,526 300,531 308,533 316,534 324,534 332,532 340,527 348,518 356,507 364,495 372,480 380,472 388,467 396,470 404,478 412,486 420,493 428,498 436,501 444,502 452,502 460,502 468,502 476,503 484,504 492,506 500,510 508,515 516,521 524,526 532,529 540,532 548,535 556,535 564,535 572,534 580,534 588,534 596,535 604,538 612,540 620,541 628,541 636,541 644,541 652,537 660,536 668,535 676,529" fill="none" stroke="#ff0000" stroke-width="2" stroke-linejoin="round" shape-rendering="crispEdges"/></g><text x="15.50" y="394" font-family='"Liberation Sans", sans-serif' font-size="10" fill="#ffffff" stroke="#ffffff" stroke-width="0.25" textLength="55.80" lengthAdjust="spacingAndGlyphs" text-rendering="geometricPrecision">Stoch(21,5,5)</text><text x="73.20" y="394" font-family='"Liberation Sans", sans-serif' font-size="10" fill="#ffffff" stroke="#ffffff" stroke-width="0.25" textLength="34.10" lengthAdjust="spacingAndGlyphs" text-rendering="geometricPrecision">46.6334</text><text x="109.70" y="394" font-family='"Liberation Sans", sans-serif' font-size="10" fill="#ffffff" stroke="#ffffff" stroke-width="0.25" textLength="33.80" lengthAdjust="spacingAndGlyphs" text-rendering="geometricPrecision">38.7232</text><text x="682.90" y="50" font-family='"Liberation Sans", sans-serif' font-size="10" fill="#ffffff" stroke="#ffffff" stroke-width="0.25" textLength="33.20" lengthAdjust="spacingAndGlyphs" text-rendering="geometricPrecision">1.00070</text><text x="682.90" y="83" font-family='"Liberation Sans", sans-serif' font-size="10" fill="#ffffff" stroke="#ffffff" stroke-width="0.25" textLength="33.20" lengthAdjust="spacingAndGlyphs" text-rendering="geometricPrecision">0.99610</text><text x="682.90" y="149" font-family='"Liberation Sans", sans-serif' font-size="10" fill="#ffffff" stroke="#ffffff" stroke-width="0.25" textLength="33.20" lengthAdjust="spacingAndGlyphs" text-rendering="geometricPrecision">0.98680</text><text x="682.90" y="182" font-family='"Liberation Sans", sans-serif' font-size="10" fill="#ffffff" stroke="#ffffff" stroke-width="0.25" textLength="33.20" lengthAdjust="spacingAndGlyphs" text-rendering="geometricPrecision">0.98220</text><text x="682.90" y="215" font-family='"Liberation Sans", sans-serif' font-size="10" fill="#ffffff" stroke="#ffffff" stroke-width="0.25" textLength="33.20" lengthAdjust="spacingAndGlyphs" text-rendering="geometricPrecision">0.97750</text><text x="682.90" y="248" font-family='"Liberation Sans", sans-serif' font-size="10" fill="#ffffff" stroke="#ffffff" stroke-width="0.25" textLength="33.20" lengthAdjust="spacingAndGlyphs" text-rendering="geometricPrecision">0.97290</text><text x="682.90" y="281" font-family='"Liberation Sans", sans-serif' font-size="10" fill="#ffffff" stroke="#ffffff" stroke-width="0.25" textLength="33.20" lengthAdjust="spacingAndGlyphs" text-rendering="geometricPrecision">0.96820</text><text x="682.90" y="314" font-family='"Liberation Sans", sans-serif' font-size="10" fill="#ffffff" stroke="#ffffff" stroke-width="0.25" textLength="33.20" lengthAdjust="spacingAndGlyphs" text-rendering="geometricPrecision">0.96360</text><text x="682.90" y="347" font-family='"Liberation Sans", sans-serif' font-size="10" fill="#ffffff" stroke="#ffffff" stroke-width="0.25" textLength="33.20" lengthAdjust="spacingAndGlyphs" text-rendering="geometricPrecision">0.95900</text><text x="682.90" y="380" font-family='"Liberation Sans", sans-serif' font-size="10" fill="#ffffff" stroke="#ffffff" stroke-width="0.25" textLength="33.20" lengthAdjust="spacingAndGlyphs" text-rendering="geometricPrecision">0.95430</text><rect x="679" y="105" width="41" height="11" fill="#ffffff"/><text x="682.30" y="114" font-family='"Liberation Sans", sans-serif' font-size="10" fill="#000000" stroke="#000000" stroke-width="0.15" textLength="33.80" lengthAdjust="spacingAndGlyphs" text-rendering="geometricPrecision">0.99172</text><text x="681.40" y="392" font-family='"Liberation Sans", sans-serif' font-size="10" fill="#ffffff" stroke="#ffffff" stroke-width="0.25" textLength="14.70" lengthAdjust="spacingAndGlyphs" text-rendering="geometricPrecision">100</text><text x="679.60" y="420" font-family='"Liberation Sans", sans-serif' font-size="10" fill="#ffffff" stroke="#ffffff" stroke-width="0.25" textLength="11.00" lengthAdjust="spacingAndGlyphs" text-rendering="geometricPrecision">80</text><text x="679.60" y="522" font-family='"Liberation Sans", sans-serif' font-size="10" fill="#ffffff" stroke="#ffffff" stroke-width="0.25" textLength="11.00" lengthAdjust="spacingAndGlyphs" text-rendering="geometricPrecision">20</text><text x="680.70" y="548.5" font-family='"Liberation Sans", sans-serif' font-size="10" fill="#ffffff" stroke="#ffffff" stroke-width="0.25" textLength="5.70" lengthAdjust="spacingAndGlyphs" text-rendering="geometricPrecision">0</text><text x="10.90" y="564.5" font-family='"Liberation Sans", sans-serif' font-size="10" fill="#ffffff" stroke="#ffffff" stroke-width="0.25" textLength="51.80" lengthAdjust="spacingAndGlyphs" text-rendering="geometricPrecision">20 Sep 2022</text><text x="74.90" y="564.5" font-family='"Liberation Sans", sans-serif' font-size="10" fill="#ffffff" stroke="#ffffff" stroke-width="0.25" textLength="55.80" lengthAdjust="spacingAndGlyphs" text-rendering="geometricPrecision">21 Sep 02:00</text><text x="138.90" y="564.5" font-family='"Liberation Sans", sans-serif' font-size="10" fill="#ffffff" stroke="#ffffff" stroke-width="0.25" textLength="55.80" lengthAdjust="spacingAndGlyphs" text-rendering="geometricPrecision">21 Sep 10:00</text><text x="202.90" y="564.5" font-family='"Liberation Sans", sans-serif' font-size="10" fill="#ffffff" stroke="#ffffff" stroke-width="0.25" textLength="55.80" lengthAdjust="spacingAndGlyphs" text-rendering="geometricPrecision">21 Sep 18:00</text><text x="266.90" y="564.5" font-family='"Liberation Sans", sans-serif' font-size="10" fill="#ffffff" stroke="#ffffff" stroke-width="0.25" textLength="55.80" lengthAdjust="spacingAndGlyphs" text-rendering="geometricPrecision">22 Sep 02:00</text><text x="330.90" y="564.5" font-family='"Liberation Sans", sans-serif' font-size="10" fill="#ffffff" stroke="#ffffff" stroke-width="0.25" textLength="55.80" lengthAdjust="spacingAndGlyphs" text-rendering="geometricPrecision">22 Sep 10:00</text><text x="394.90" y="564.5" font-family='"Liberation Sans", sans-serif' font-size="10" fill="#ffffff" stroke="#ffffff" stroke-width="0.25" textLength="55.80" lengthAdjust="spacingAndGlyphs" text-rendering="geometricPrecision">22 Sep 18:00</text><text x="458.90" y="564.5" font-family='"Liberation Sans", sans-serif' font-size="10" fill="#ffffff" stroke="#ffffff" stroke-width="0.25" textLength="55.80" lengthAdjust="spacingAndGlyphs" text-rendering="geometricPrecision">23 Sep 02:00</text><text x="522.90" y="564.5" font-family='"Liberation Sans", sans-serif' font-size="10" fill="#ffffff" stroke="#ffffff" stroke-width="0.25" textLength="55.80" lengthAdjust="spacingAndGlyphs" text-rendering="geometricPrecision">23 Sep 10:00</text><text x="586.90" y="564.5" font-family='"Liberation Sans", sans-serif' font-size="10" fill="#ffffff" stroke="#ffffff" stroke-width="0.25" textLength="55.80" lengthAdjust="spacingAndGlyphs" text-rendering="geometricPrecision">23 Sep 18:00</text><text x="650.90" y="564.5" font-family='"Liberation Sans", sans-serif' font-size="10" fill="#ffffff" stroke="#ffffff" stroke-width="0.25" textLength="55.80" lengthAdjust="spacingAndGlyphs" text-rendering="geometricPrecision">26 Sep 02:00</text></svg></body></html>
